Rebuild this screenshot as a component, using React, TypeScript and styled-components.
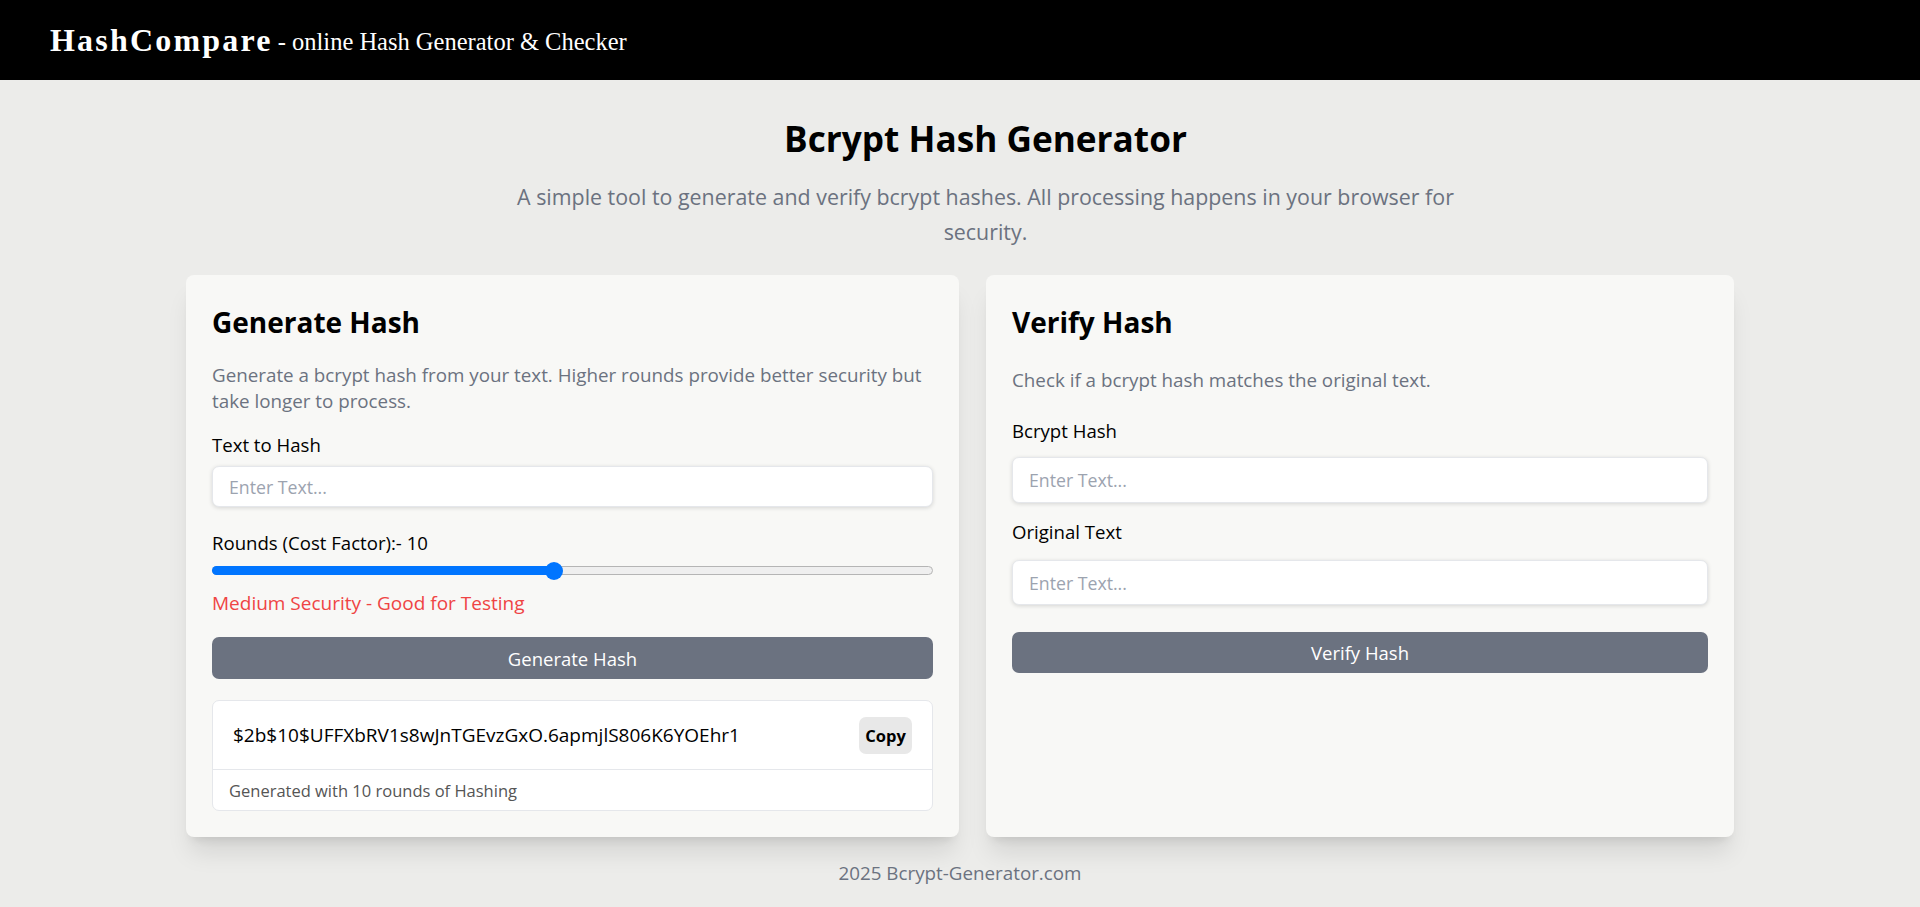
import React from "react";
import styled, { createGlobalStyle } from "styled-components";

const GlobalStyle = createGlobalStyle`
  * { box-sizing: border-box; }
  html, body { margin: 0; padding: 0; }
  body {
    background: #ececea;
    font-family: "Open Sans", "Noto Sans", sans-serif;
    color: #000;
  }
`;

const Page = styled.div`
  min-height: 907px;
  display: flex;
  flex-direction: column;
`;

const Header = styled.header`
  height: 80px;
  background: #000;
  display: flex;
  align-items: center;
  padding-left: 50px;
  gap: 5px;
  font-family: "Liberation Serif", "Times New Roman", serif;
  color: #fff;
`;

const Brand = styled.span`
  font-size: 32px;
  font-weight: 700;
  letter-spacing: 2.2px;
`;

const Tagline = styled.span`
  font-size: 24.5px;
  margin-top: 4px;
`;

const Main = styled.main`
  display: flex;
  flex-direction: column;
  align-items: center;
  padding-top: 37px;
`;

const Hero = styled.div`
  display: flex;
  flex-direction: column;
  align-items: center;
  padding-left: 51px;
`;

const Title = styled.h1`
  margin: 0;
  font-size: 35.2px;
  line-height: 43px;
  font-weight: 700;
`;

const Subtitle = styled.p`
  margin: 19px 0 0;
  max-width: 960px;
  text-align: center;
  font-size: 21.4px;
  line-height: 35px;
  color: #6b7280;
`;

const Cards = styled.div`
  margin-top: 26px;
  width: 1548px;
  display: grid;
  grid-template-columns: 773px 748px;
  gap: 27px;
`;

const Card = styled.section`
  background: #f8f8f6;
  border-radius: 8px;
  padding: 30px 26px 26px;
  box-shadow: 0 20px 25px -5px rgba(0, 0, 0, 0.1), 0 8px 10px -6px rgba(0, 0, 0, 0.1);
  display: flex;
  flex-direction: column;
`;

const CardTitle = styled.h2`
  margin: 0;
  font-size: 28px;
  line-height: 34px;
  font-weight: 700;
`;

const CardDesc = styled.p<{ $top: number }>`
  margin: ${(p) => p.$top}px 0 0;
  font-size: 18.8px;
  line-height: 26px;
  color: #6b7280;
`;

const Label = styled.label<{ $top: number }>`
  display: block;
  margin-top: ${(p) => p.$top}px;
  font-size: 18.6px;
  line-height: 27px;
`;

const TextInput = styled.input<{ $h: number; $top: number }>`
  display: block;
  width: 100%;
  height: ${(p) => p.$h}px;
  margin-top: ${(p) => p.$top}px;
  padding: 0 16px;
  background: #fff;
  border: 1px solid #e5e7eb;
  border-radius: 7px;
  box-shadow: 0 1px 4px rgba(0, 0, 0, 0.14);
  font-family: inherit;
  font-size: 17.7px;
  color: #111;
  outline: none;
  &::placeholder { color: #9ca3af; }
`;

const SliderTrack = styled.div`
  position: relative;
  margin-top: 10px;
  height: 9px;
  border-radius: 5px;
  background: #efefef;
  border: 1px solid #b5b5b5;
`;

const SliderFill = styled.div`
  height: 9px;
  margin: -1px 0 0 -1px;
  border-radius: 5px 0 0 5px;
  background: #0075ff;
`;

const SliderThumb = styled.div`
  position: absolute;
  top: 50%;
  width: 18px;
  height: 18px;
  margin: -9px 0 0 -9px;
  border-radius: 50%;
  background: #0075ff;
`;

const Hint = styled.p`
  margin: 15px 0 0;
  font-size: 19px;
  line-height: 27px;
  color: #ef4444;
`;

const ActionButton = styled.button<{ $h: number; $top: number }>`
  display: block;
  width: 100%;
  height: ${(p) => p.$h}px;
  margin-top: ${(p) => p.$top}px;
  border: none;
  border-radius: 7px;
  background: #6b7280;
  color: #fff;
  font-family: inherit;
  font-size: 18.5px;
`;

const Result = styled.div`
  margin-top: 21px;
  background: #fff;
  border: 1px solid #e5e7eb;
  border-radius: 7px;
`;

const ResultRow = styled.div`
  height: 69px;
  display: flex;
  align-items: center;
  justify-content: space-between;
  padding: 0 20px 0 20px;
  border-bottom: 1px solid #e5e7eb;
`;

const HashText = styled.span`
  font-size: 19px;
`;

const CopyButton = styled.button`
  width: 53px;
  height: 37px;
  border: none;
  border-radius: 7px;
  background: #e8e8e8;
  font-family: inherit;
  font-weight: 700;
  font-size: 16.5px;
  color: #000;
`;

const ResultNote = styled.div`
  height: 40px;
  display: flex;
  align-items: center;
  padding: 0 16px;
  font-size: 16.5px;
  color: #555;
`;

const Footer = styled.footer`
  margin-top: 23px;
  text-align: center;
  font-size: 18.8px;
  line-height: 27px;
  color: #6b7280;
`;

const ROUNDS = 10;
const MIN = 1;
const MAX = 20;

function RoundsSlider({ value }: { value: number }) {
  const pct = (value - MIN) / (MAX - MIN);
  const pos = `calc(9px + ${pct} * (100% - 18px))`;
  return (
    <SliderTrack>
      <SliderFill style={{ width: pos }} />
      <SliderThumb style={{ left: pos }} />
    </SliderTrack>
  );
}

export default function App() {
  return (
    <Page>
      <GlobalStyle />
      <Header>
        <Brand>HashCompare</Brand>
        <Tagline>- online Hash Generator &amp; Checker</Tagline>
      </Header>
      <Main>
        <Hero>
          <Title>Bcrypt Hash Generator</Title>
          <Subtitle>
            A simple tool to generate and verify bcrypt hashes. All processing happens in your browser for security.
          </Subtitle>
        </Hero>
        <Cards>
          <Card>
            <CardTitle>Generate Hash</CardTitle>
            <CardDesc $top={23}>
              Generate a bcrypt hash from your text. Higher rounds provide better security but take longer to process.
            </CardDesc>
            <Label $top={17}>Text to Hash</Label>
            <TextInput $h={41} $top={8} placeholder="Enter Text..." />
            <Label $top={22}>Rounds (Cost Factor):- {ROUNDS}</Label>
            <RoundsSlider value={ROUNDS} />
            <Hint>Medium Security - Good for Testing</Hint>
            <ActionButton $h={42} $top={20}>Generate Hash</ActionButton>
            <Result>
              <ResultRow>
                <HashText>$2b$10$UFFXbRV1s8wJnTGEvzGxO.6apmjlS806K6YOEhr1</HashText>
                <CopyButton>Copy</CopyButton>
              </ResultRow>
              <ResultNote>Generated with {ROUNDS} rounds of Hashing</ResultNote>
            </Result>
          </Card>
          <Card>
            <CardTitle>Verify Hash</CardTitle>
            <CardDesc $top={28}>Check if a bcrypt hash matches the original text.</CardDesc>
            <Label $top={24}>Bcrypt Hash</Label>
            <TextInput $h={46} $top={13} placeholder="Enter Text..." />
            <Label $top={15}>Original Text</Label>
            <TextInput $h={45} $top={15} placeholder="Enter Text..." />
            <ActionButton $h={41} $top={27}>Verify Hash</ActionButton>
          </Card>
        </Cards>
        <Footer>2025 Bcrypt-Generator.com</Footer>
      </Main>
    </Page>
  );
}
